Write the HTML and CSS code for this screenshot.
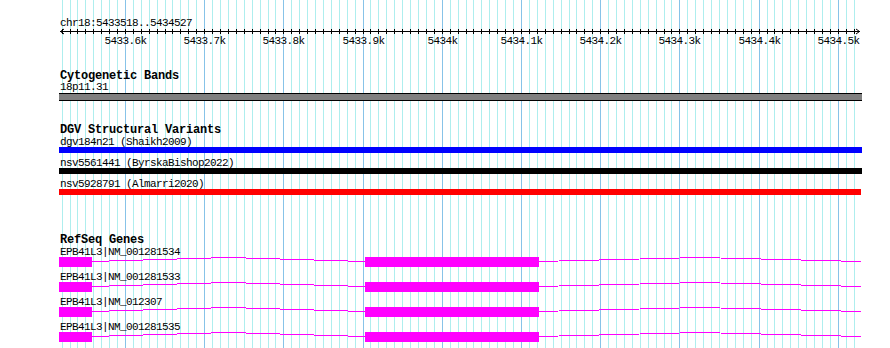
FILE: index.html
```html
<!DOCTYPE html>
<html>
<head>
<meta charset="utf-8">
<link rel="stylesheet" href="styles.css">
</head>
<body>
<div class="panel">
  <svg class="grid" width="890" height="348" viewBox="0 0 890 348" shape-rendering="crispEdges">
    <path class="minor" d="M62.5 0V348M70.5 0V348M77.5 0V348M85.5 0V348M93.5 0V348M101.5 0V348M109.5 0V348M117.5 0V348M133.5 0V348M141.5 0V348M149.5 0V348M157.5 0V348M165.5 0V348M172.5 0V348M180.5 0V348M188.5 0V348M196.5 0V348M212.5 0V348M220.5 0V348M228.5 0V348M236.5 0V348M244.5 0V348M252.5 0V348M260.5 0V348M268.5 0V348M275.5 0V348M291.5 0V348M299.5 0V348M307.5 0V348M315.5 0V348M323.5 0V348M331.5 0V348M339.5 0V348M347.5 0V348M355.5 0V348M370.5 0V348M378.5 0V348M386.5 0V348M394.5 0V348M402.5 0V348M410.5 0V348M418.5 0V348M426.5 0V348M434.5 0V348M450.5 0V348M458.5 0V348M466.5 0V348M473.5 0V348M481.5 0V348M489.5 0V348M497.5 0V348M505.5 0V348M513.5 0V348M529.5 0V348M537.5 0V348M545.5 0V348M553.5 0V348M561.5 0V348M569.5 0V348M576.5 0V348M584.5 0V348M592.5 0V348M608.5 0V348M616.5 0V348M624.5 0V348M632.5 0V348M640.5 0V348M648.5 0V348M656.5 0V348M664.5 0V348M671.5 0V348M687.5 0V348M695.5 0V348M703.5 0V348M711.5 0V348M719.5 0V348M727.5 0V348M735.5 0V348M743.5 0V348M751.5 0V348M767.5 0V348M774.5 0V348M782.5 0V348M790.5 0V348M798.5 0V348M806.5 0V348M814.5 0V348M822.5 0V348M830.5 0V348M846.5 0V348M854.5 0V348"/>
    <path class="major" d="M125.5 0V348M204.5 0V348M283.5 0V348M363.5 0V348M442.5 0V348M521.5 0V348M600.5 0V348M679.5 0V348M759.5 0V348M838.5 0V348"/>
  </svg>
  <div class="content">
    <div class="chr">chr18:5433518..5434527</div>
    <svg class="ruler" width="890" height="21" viewBox="0 0 890 21">
      <g shape-rendering="crispEdges">
        <path class="ruler-line" d="M60 3.5H860"/>
        <path class="ruler-ticks" d="M62.5 1V6M70.5 1V6M77.5 1V6M85.5 1V6M93.5 1V6M101.5 1V6M109.5 1V6M117.5 1V6M125.5 1V6M133.5 1V6M141.5 1V6M149.5 1V6M157.5 1V6M165.5 1V6M172.5 1V6M180.5 1V6M188.5 1V6M196.5 1V6M204.5 1V6M212.5 1V6M220.5 1V6M228.5 1V6M236.5 1V6M244.5 1V6M252.5 1V6M260.5 1V6M268.5 1V6M275.5 1V6M283.5 1V6M291.5 1V6M299.5 1V6M307.5 1V6M315.5 1V6M323.5 1V6M331.5 1V6M339.5 1V6M347.5 1V6M355.5 1V6M363.5 1V6M370.5 1V6M378.5 1V6M386.5 1V6M394.5 1V6M402.5 1V6M410.5 1V6M418.5 1V6M426.5 1V6M434.5 1V6M442.5 1V6M450.5 1V6M458.5 1V6M466.5 1V6M473.5 1V6M481.5 1V6M489.5 1V6M497.5 1V6M505.5 1V6M513.5 1V6M521.5 1V6M529.5 1V6M537.5 1V6M545.5 1V6M553.5 1V6M561.5 1V6M569.5 1V6M576.5 1V6M584.5 1V6M592.5 1V6M600.5 1V6M608.5 1V6M616.5 1V6M624.5 1V6M632.5 1V6M640.5 1V6M648.5 1V6M656.5 1V6M664.5 1V6M671.5 1V6M679.5 1V6M687.5 1V6M695.5 1V6M703.5 1V6M711.5 1V6M719.5 1V6M727.5 1V6M735.5 1V6M743.5 1V6M751.5 1V6M759.5 1V6M767.5 1V6M774.5 1V6M782.5 1V6M790.5 1V6M798.5 1V6M806.5 1V6M814.5 1V6M822.5 1V6M830.5 1V6M838.5 1V6M846.5 1V6M854.5 1V6"/>
      </g>
      <path class="ruler-arrow" d="M64 1L60.5 3.5L64 6M856 1L859.5 3.5L856 6"/>
      <g class="ruler-labels">
        <text x="125.5" y="16">5433.6k</text>
        <text x="204.5" y="16">5433.7k</text>
        <text x="283.5" y="16">5433.8k</text>
        <text x="363.5" y="16">5433.9k</text>
        <text x="442.5" y="16">5434k</text>
        <text x="521.5" y="16">5434.1k</text>
        <text x="600.5" y="16">5434.2k</text>
        <text x="679.5" y="16">5434.3k</text>
        <text x="759.5" y="16">5434.4k</text>
        <text x="838.5" y="16">5434.5k</text>
      </g>
    </svg>

    <section class="track cyto">
      <div class="title">Cytogenetic Bands</div>
      <div class="label">18p11.31</div>
      <div class="band"></div>
    </section>

    <section class="track dgv">
      <div class="title">DGV Structural Variants</div>
      <div class="feature">
        <div class="label">dgv184n21 (Shaikh2009)</div>
        <div class="sv sv-blue"></div>
      </div>
      <div class="feature">
        <div class="label">nsv5561441 (ByrskaBishop2022)</div>
        <div class="sv sv-black"></div>
      </div>
      <div class="feature">
        <div class="label">nsv5928791 (Almarri2020)</div>
        <div class="sv sv-red"></div>
      </div>
    </section>

    <section class="track genes">
      <div class="title">RefSeq Genes</div>
      <div class="feature">
        <div class="label">EPB41L3|NM_001281534</div>
        <svg class="gene" width="803" height="10" viewBox="0 0 803 10" shape-rendering="crispEdges">
          <rect class="exon" x="0" y="0" width="33" height="10"/>
          <rect class="exon" x="306" y="0" width="174" height="10"/>
          <polyline class="intron" points="33,4.5 169.5,0.5 306,4.5"/>
          <polyline class="intron" points="480,4.5 641,0.5 802,4.5"/>
        </svg>
      </div>
      <div class="feature">
        <div class="label">EPB41L3|NM_001281533</div>
        <svg class="gene" width="803" height="10" viewBox="0 0 803 10" shape-rendering="crispEdges">
          <rect class="exon" x="0" y="0" width="33" height="10"/>
          <rect class="exon" x="306" y="0" width="174" height="10"/>
          <polyline class="intron" points="33,4.5 169.5,0.5 306,4.5"/>
          <polyline class="intron" points="480,4.5 641,0.5 802,4.5"/>
        </svg>
      </div>
      <div class="feature">
        <div class="label">EPB41L3|NM_012307</div>
        <svg class="gene" width="803" height="10" viewBox="0 0 803 10" shape-rendering="crispEdges">
          <rect class="exon" x="0" y="0" width="33" height="10"/>
          <rect class="exon" x="306" y="0" width="174" height="10"/>
          <polyline class="intron" points="33,4.5 169.5,0.5 306,4.5"/>
          <polyline class="intron" points="480,4.5 641,0.5 802,4.5"/>
        </svg>
      </div>
      <div class="feature">
        <div class="label">EPB41L3|NM_001281535</div>
        <svg class="gene" width="803" height="10" viewBox="0 0 803 10" shape-rendering="crispEdges">
          <rect class="exon" x="0" y="0" width="33" height="10"/>
          <rect class="exon" x="306" y="0" width="174" height="10"/>
          <polyline class="intron" points="33,4.5 169.5,0.5 306,4.5"/>
          <polyline class="intron" points="480,4.5 641,0.5 802,4.5"/>
        </svg>
      </div>
    </section>
  </div>
</div>
</body>
</html>
```

FILE: styles.css
```css
html, body {
  margin: 0;
  padding: 0;
  background: #ffffff;
}

body {
  font-family: "Liberation Mono", "DejaVu Sans Mono", monospace;
  font-size: 11px;
  color: #000000;
}

.panel {
  position: relative;
  width: 890px;
  height: 348px;
  overflow: hidden;
}

.grid {
  position: absolute;
  left: 0;
  top: 0;
}

.grid .minor {
  stroke: #aeeeee;
  stroke-width: 1;
  fill: none;
}

.grid .major {
  stroke: #87c3e8;
  stroke-width: 1;
  fill: none;
}

.content {
  position: relative;
  padding-top: 18px;
}

.chr {
  padding-left: 60px;
  line-height: 10px;
  letter-spacing: -0.6px;
  white-space: pre;
}

.ruler {
  display: block;
}

.ruler-line,
.ruler-ticks,
.ruler-arrow {
  stroke: #000000;
  stroke-width: 1;
  fill: none;
}

.ruler-labels text {
  font-family: "Liberation Mono", "DejaVu Sans Mono", monospace;
  font-size: 11px;
  letter-spacing: -0.6px;
  text-anchor: middle;
  fill: #000000;
}

.track {
  padding-left: 59px;
}

.title {
  font-weight: bold;
  font-size: 12px;
  letter-spacing: -0.2px;
  line-height: 10px;
  padding-left: 1px;
  white-space: pre;
}

.label {
  line-height: 10px;
  letter-spacing: -0.6px;
  padding-left: 1px;
  white-space: pre;
}

.cyto {
  margin-top: 22px;
}

.cyto .label {
  margin-top: 1px;
}

.band {
  margin-top: 1px;
  width: 803px;
  height: 6px;
  background: #808080;
  border-top: 1px solid #000000;
  border-bottom: 1px solid #000000;
}

.dgv {
  margin-top: 24px;
}

.genes {
  margin-top: 40px;
}

.feature {
  margin-top: 5px;
}

.title + .feature {
  margin-top: 2px;
}

.sv {
  width: 803px;
  height: 6px;
}

.sv-blue {
  background: #0000ff;
}

.sv-black {
  background: #000000;
}

.sv-red {
  width: 802px;
  background: #ff0000;
}

.gene {
  display: block;
}

.exon {
  fill: #ff00ff;
}

.intron {
  fill: none;
  stroke: #ff00ff;
  stroke-width: 1;
}
```
